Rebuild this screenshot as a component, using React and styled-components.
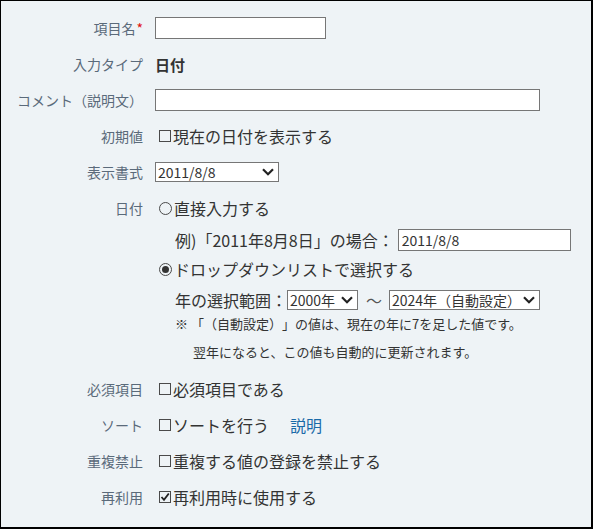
import React from "react";
import styled, { createGlobalStyle } from "styled-components";

const GlobalStyle = createGlobalStyle`
  html, body {
    margin: 0;
    padding: 0;
    background: #fff;
  }
  body {
    font-family: "Noto Sans CJK JP", "Noto Sans", sans-serif;
    color: #333;
    text-spacing-trim: space-all;
  }
`;

const Frame = styled.div`
  box-sizing: border-box;
  width: 593px;
  height: 529px;
  border: 1px solid #000;
  border-right-width: 2px;
  border-bottom-width: 2px;
  background: #eef3f6;
  padding-top: 9px;
`;

const Row = styled.div`
  display: grid;
  grid-template-columns: 142px 1fr;
  column-gap: 12px;
  align-items: start;
`;

const Label = styled.div`
  height: 36px;
  line-height: 36px;
  text-align: right;
  font-size: 14px;
  color: #5a6a7a;
  white-space: nowrap;
`;

const Required = styled.span`
  color: #e01010;
  margin-left: 1px;
`;

const Value = styled.div`
  display: flex;
  align-items: center;
  height: ${(p) => p.$h || 36}px;
  padding-left: ${(p) => p.$indent || 0}px;
  font-size: 16px;
  white-space: nowrap;
`;

const Stack = styled.div`
  display: flex;
  flex-direction: column;
`;

const Bold = styled.span`
  font-size: 15px;
  font-weight: 700;
  color: #333;
`;

const TextInput = styled.input`
  box-sizing: border-box;
  width: ${(p) => p.$w}px;
  height: 22px;
  margin: 0 0 0 ${(p) => p.$ml || 0}px;
  border: 1px solid #767676;
  background: #fff;
  padding: 0 3px;
  font-family: inherit;
  font-size: 14px;
  color: #333;
  outline: none;
`;

const SelectWrap = styled.span`
  position: relative;
  display: inline-flex;
  width: ${(p) => p.$w}px;
  height: 20px;
`;

const Select = styled.select`
  appearance: none;
  box-sizing: border-box;
  width: 100%;
  height: 20px;
  margin: 0;
  border: 1px solid #767676;
  border-radius: 0;
  background: #fff;
  padding: 0 18px 0 2px;
  font-family: inherit;
  font-size: 14px;
  line-height: 18px;
  color: #333;
  outline: none;
`;

const Chevron = styled.svg`
  position: absolute;
  right: 5px;
  top: 6px;
  pointer-events: none;
`;

const Box = styled.span`
  box-sizing: border-box;
  display: inline-flex;
  align-items: center;
  justify-content: center;
  width: 12px;
  height: 12px;
  margin: 0 2px 0 4px;
  border: 1px solid #4a4a4a;
`;

const Radio = styled.span`
  box-sizing: border-box;
  display: inline-flex;
  align-items: center;
  justify-content: center;
  width: 13px;
  height: 13px;
  margin: 0 2px 0 4px;
  border: 1px solid #4a4a4a;
  border-radius: 50%;

  &::after {
    content: "";
    display: ${(p) => (p.$on ? "block" : "none")};
    width: 7px;
    height: 7px;
    border-radius: 50%;
    background: #333;
  }
`;

const Link = styled.a`
  margin-left: 21px;
  color: #1a6aa8;
  text-decoration: none;
`;

const Note = styled.div`
  font-size: 13px;
  line-height: 16px;
  color: #333;
  padding-left: ${(p) => p.$indent || 0}px;
  height: ${(p) => p.$h}px;
  display: flex;
  align-items: center;
  white-space: nowrap;
`;

const Tilde = styled.span`
  margin: 0 7px 0 8px;
  color: #555;
`;

function Dropdown({ w, value }) {
  return (
    <SelectWrap $w={w}>
      <Select defaultValue={value}>
        <option>{value}</option>
      </Select>
      <Chevron width="12" height="8" viewBox="0 0 12 8">
        <path d="M1 1.2 L6 6.2 L11 1.2" fill="none" stroke="#222" strokeWidth="2.2" />
      </Chevron>
    </SelectWrap>
  );
}

function Check({ on }) {
  return (
    <Box>
      {on && (
        <svg width="10" height="10" viewBox="0 0 10 10">
          <path d="M1.5 5 L4 7.8 L8.8 1.5" fill="none" stroke="#222" strokeWidth="1.8" />
        </svg>
      )}
    </Box>
  );
}

export default function App() {
  return (
    <>
      <GlobalStyle />
      <Frame>
        <Row>
          <Label>
            項目名<Required>*</Required>
          </Label>
          <Value>
            <TextInput $w={171} />
          </Value>
        </Row>
        <Row>
          <Label>入力タイプ</Label>
          <Value>
            <Bold>日付</Bold>
          </Value>
        </Row>
        <Row>
          <Label>コメント（説明文）</Label>
          <Value>
            <TextInput $w={385} />
          </Value>
        </Row>
        <Row>
          <Label>初期値</Label>
          <Value>
            <Check />
            現在の日付を表示する
          </Value>
        </Row>
        <Row>
          <Label>表示書式</Label>
          <Value>
            <Dropdown w={124} value="2011/8/8" />
          </Value>
        </Row>
        <Row>
          <Label>日付</Label>
          <Stack>
            <Value>
              <Radio />
              直接入力する
            </Value>
            <Value $h={28} $indent={20}>
              例)「2011年8月8日」の場合：
              <TextInput $w={173} $ml={4} defaultValue="2011/8/8" />
            </Value>
            <Value $h={30}>
              <Radio $on />
              ドロップダウンリストで選択する
            </Value>
            <Value $h={32} $indent={20}>
              年の選択範囲：
              <Dropdown w={71} value="2000年" />
              <Tilde>～</Tilde>
              <Dropdown w={151} value="2024年（自動設定）" />
            </Value>
            <Note $h={16} $indent={20}>
              ※ 「（自動設定）」の値は、現在の年に7を足した値です。
            </Note>
            <Note $h={39} $indent={38}>
              翌年になると、この値も自動的に更新されます。
            </Note>
          </Stack>
        </Row>
        <Row>
          <Label>必須項目</Label>
          <Value>
            <Check />
            必須項目である
          </Value>
        </Row>
        <Row>
          <Label>ソート</Label>
          <Value>
            <Check />
            ソートを行う
            <Link href="#">説明</Link>
          </Value>
        </Row>
        <Row>
          <Label>重複禁止</Label>
          <Value>
            <Check />
            重複する値の登録を禁止する
          </Value>
        </Row>
        <Row>
          <Label>再利用</Label>
          <Value>
            <Check on />
            再利用時に使用する
          </Value>
        </Row>
      </Frame>
    </>
  );
}
